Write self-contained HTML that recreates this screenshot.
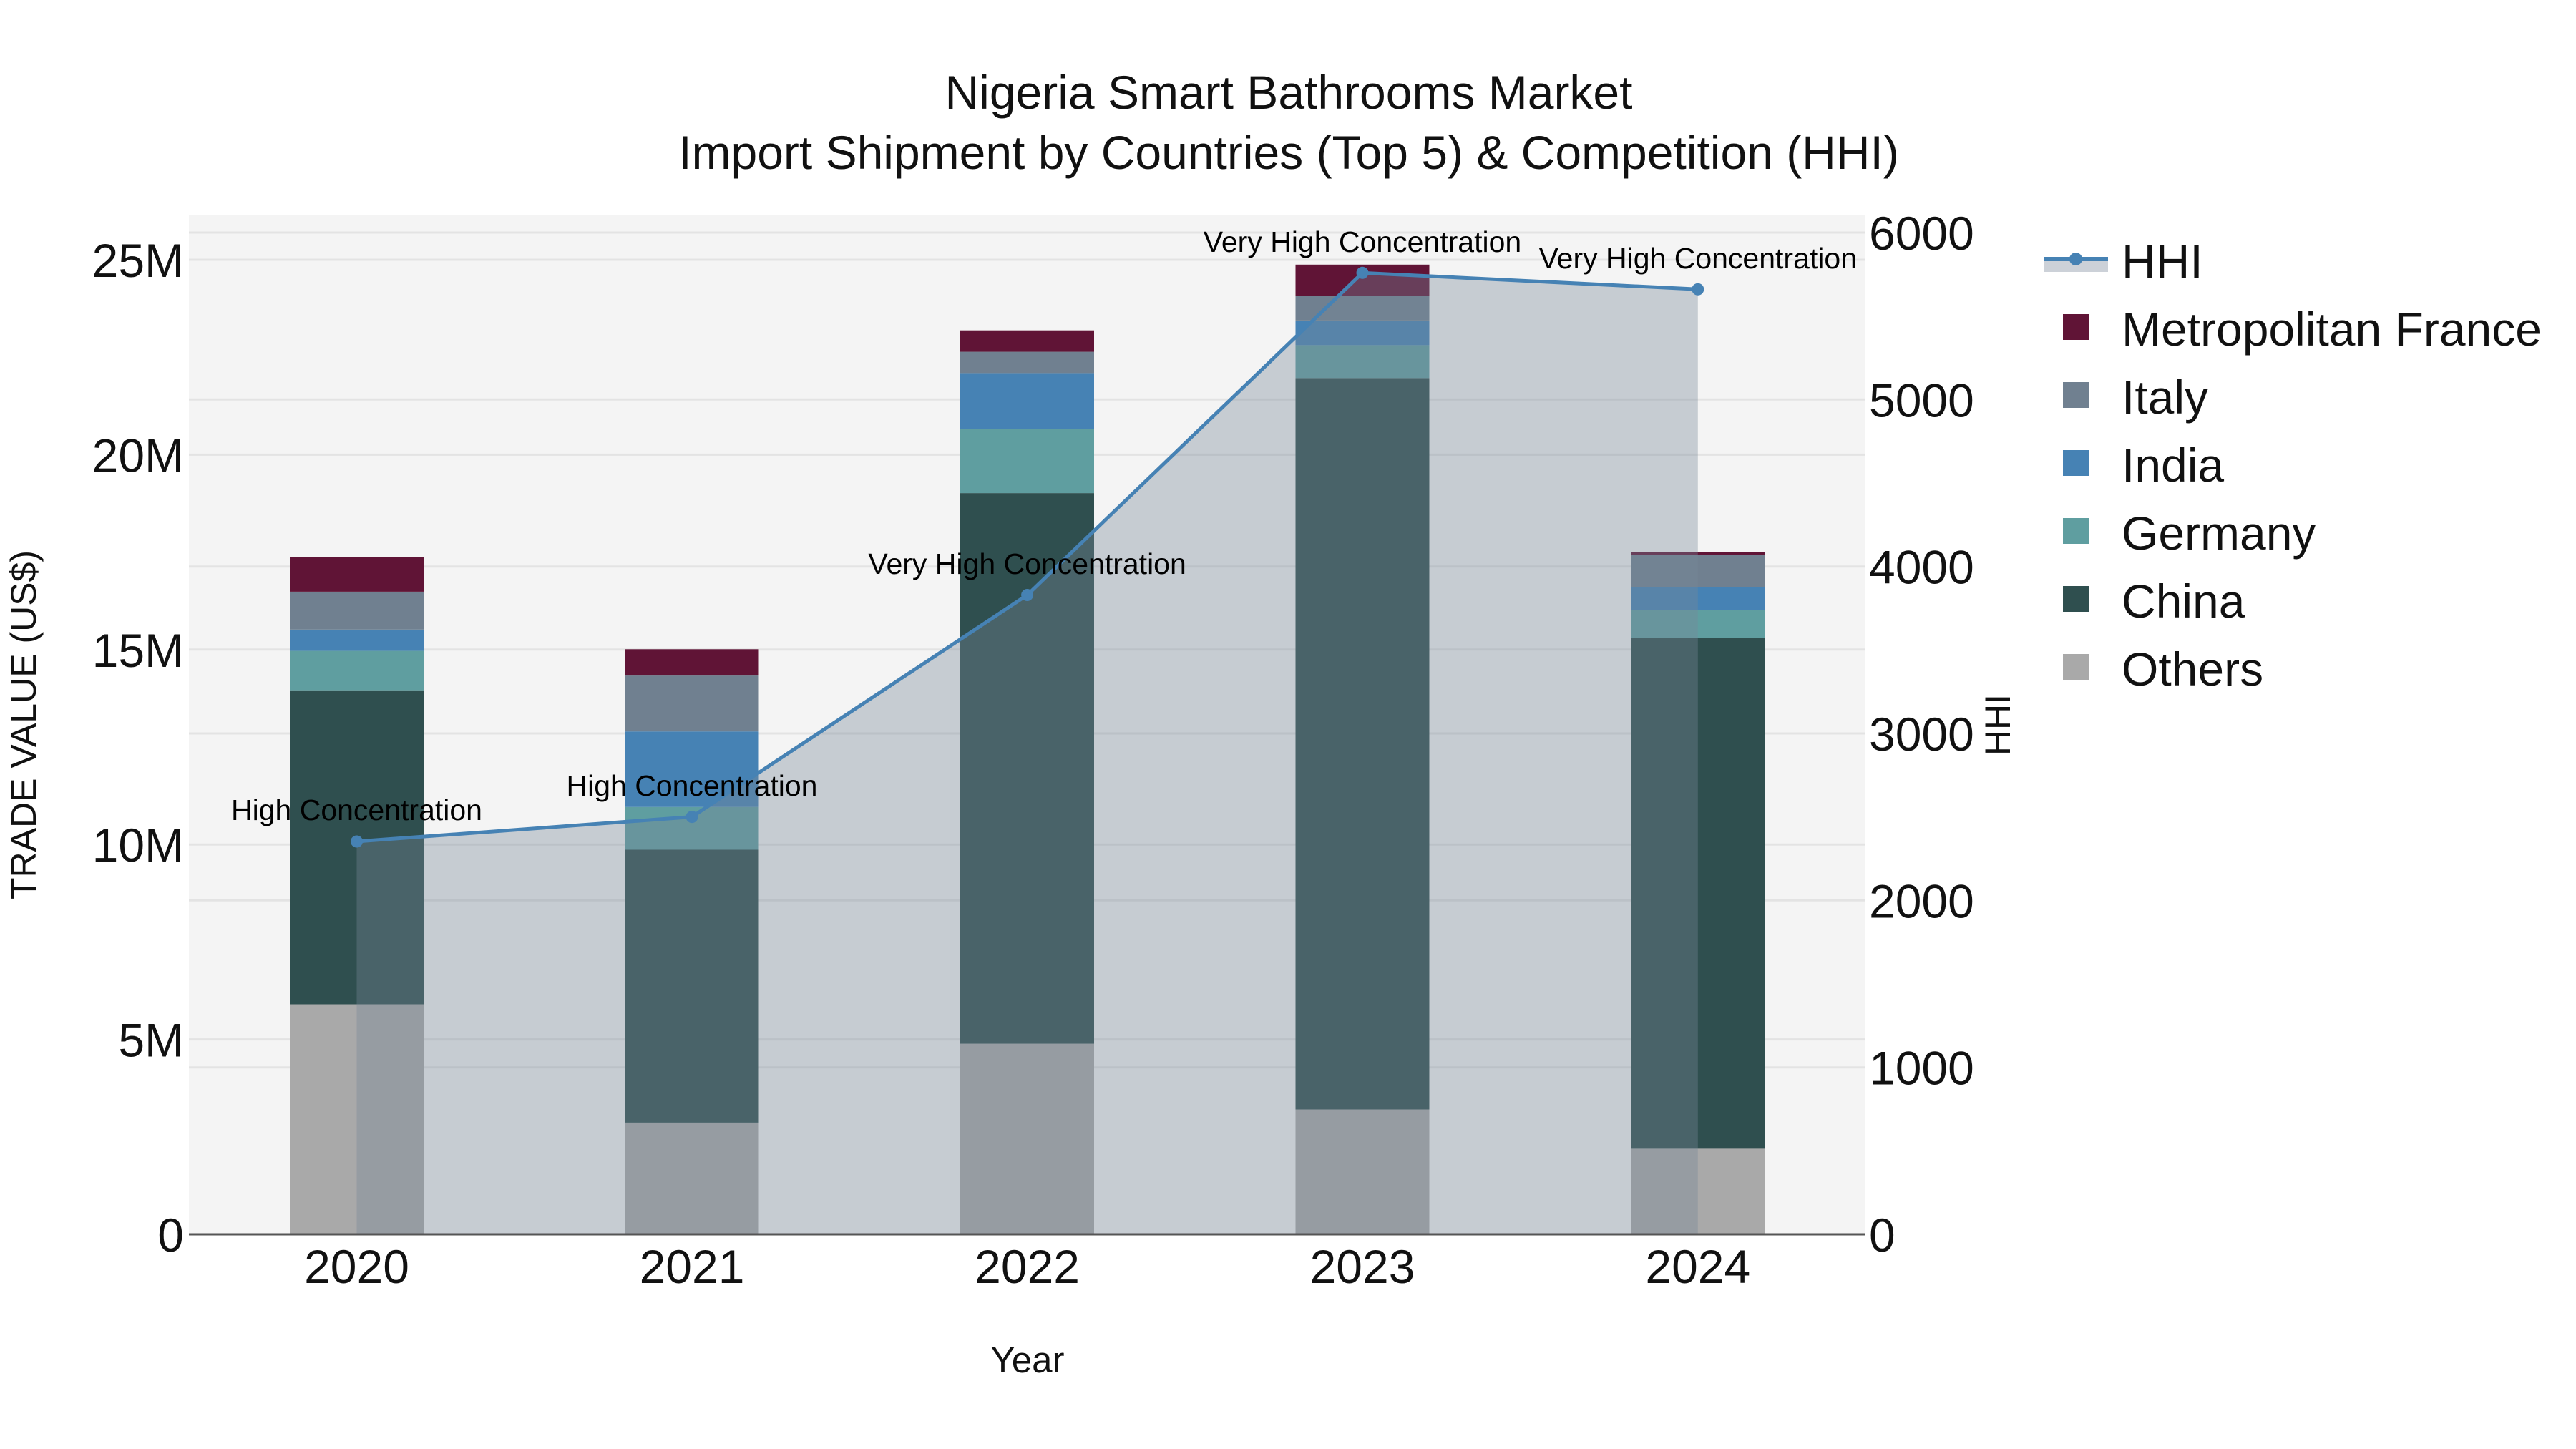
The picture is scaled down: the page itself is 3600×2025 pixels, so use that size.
<!DOCTYPE html>
<html><head><meta charset="utf-8"><style>
html,body{margin:0;padding:0;background:#fff;}
svg{display:block;font-family:"Liberation Sans",Arial,sans-serif;}
</style></head><body>
<svg width="3600" height="2025" viewBox="0 0 3600 2025" xmlns="http://www.w3.org/2000/svg">
<rect x="0" y="0" width="3600" height="2025" fill="#fff"/>
<rect x="264" y="300" width="2343" height="1425" fill="#f4f4f4"/>
<g stroke="#e3e3e3" stroke-width="3">
<line x1="264" x2="2607" y1="1452.6" y2="1452.6"/>
<line x1="264" x2="2607" y1="1180.2" y2="1180.2"/>
<line x1="264" x2="2607" y1="907.8" y2="907.8"/>
<line x1="264" x2="2607" y1="635.4" y2="635.4"/>
<line x1="264" x2="2607" y1="363" y2="363"/>
<line x1="264" x2="2607" y1="1491.7" y2="1491.7"/>
<line x1="264" x2="2607" y1="1258.3" y2="1258.3"/>
<line x1="264" x2="2607" y1="1025" y2="1025"/>
<line x1="264" x2="2607" y1="791.7" y2="791.7"/>
<line x1="264" x2="2607" y1="558.3" y2="558.3"/>
<line x1="264" x2="2607" y1="325" y2="325"/>
</g>
<!-- bars -->
<g>
<!-- 2020 -->
<rect x="405" y="1403.5" width="187" height="321.5" fill="#a9a9a9"/>
<rect x="405" y="964.7" width="187" height="438.8" fill="#2f4f4f"/>
<rect x="405" y="909.6" width="187" height="55.1" fill="#5f9ea0"/>
<rect x="405" y="879.8" width="187" height="29.8" fill="#4682b4"/>
<rect x="405" y="826.9" width="187" height="52.9" fill="#708090"/>
<rect x="405" y="778.7" width="187" height="48.2" fill="#601436"/>
<!-- 2021 -->
<rect x="873.5" y="1568.9" width="187" height="156.1" fill="#a9a9a9"/>
<rect x="873.5" y="1187.5" width="187" height="381.4" fill="#2f4f4f"/>
<rect x="873.5" y="1127.8" width="187" height="59.7" fill="#5f9ea0"/>
<rect x="873.5" y="1022.2" width="187" height="105.6" fill="#4682b4"/>
<rect x="873.5" y="944.1" width="187" height="78.1" fill="#708090"/>
<rect x="873.5" y="907.3" width="187" height="36.8" fill="#601436"/>
<!-- 2022 -->
<rect x="1342" y="1458.6" width="187" height="266.4" fill="#a9a9a9"/>
<rect x="1342" y="689.1" width="187" height="769.5" fill="#2f4f4f"/>
<rect x="1342" y="599.5" width="187" height="89.6" fill="#5f9ea0"/>
<rect x="1342" y="521.4" width="187" height="78.1" fill="#4682b4"/>
<rect x="1342" y="491.6" width="187" height="29.8" fill="#708090"/>
<rect x="1342" y="461.7" width="187" height="29.9" fill="#601436"/>
<!-- 2023 -->
<rect x="1810.5" y="1550.5" width="187" height="174.5" fill="#a9a9a9"/>
<rect x="1810.5" y="528.3" width="187" height="1022.2" fill="#2f4f4f"/>
<rect x="1810.5" y="482.4" width="187" height="45.9" fill="#5f9ea0"/>
<rect x="1810.5" y="447.9" width="187" height="34.5" fill="#4682b4"/>
<rect x="1810.5" y="413.5" width="187" height="34.4" fill="#708090"/>
<rect x="1810.5" y="369.8" width="187" height="43.7" fill="#601436"/>
<!-- 2024 -->
<rect x="2279" y="1605.4" width="187" height="119.6" fill="#a9a9a9"/>
<rect x="2279" y="891.5" width="187" height="713.9" fill="#2f4f4f"/>
<rect x="2279" y="852.6" width="187" height="38.9" fill="#5f9ea0"/>
<rect x="2279" y="821" width="187" height="31.6" fill="#4682b4"/>
<rect x="2279" y="775.5" width="187" height="45.5" fill="#708090"/>
<rect x="2279" y="771.5" width="187" height="4" fill="#601436"/>
</g>
<!-- HHI fill -->
<polygon points="498.5,1725 498.5,1176 967,1141.6 1435.6,831.5 1904,381.3 2372.8,404.3 2372.8,1725" fill="rgb(119,136,153)" fill-opacity="0.37"/>
<polyline points="498.5,1176 967,1141.6 1435.6,831.5 1904,381.3 2372.8,404.3" fill="none" stroke="#4682b4" stroke-width="5"/>
<g fill="#4682b4">
<circle cx="498.5" cy="1176" r="8.5"/>
<circle cx="967" cy="1141.6" r="8.5"/>
<circle cx="1435.6" cy="831.5" r="8.5"/>
<circle cx="1904" cy="381.3" r="8.5"/>
<circle cx="2372.8" cy="404.3" r="8.5"/>
</g>
<!-- annotations -->
<g font-size="41" fill="#000" text-anchor="middle">
<text x="498.5" y="1146">High Concentration</text>
<text x="967" y="1112">High Concentration</text>
<text x="1435.6" y="802">Very High Concentration</text>
<text x="1904" y="352">Very High Concentration</text>
<text x="2372.8" y="375">Very High Concentration</text>
</g>
<!-- axis line -->
<line x1="264" x2="2607" y1="1725" y2="1725" stroke="#555" stroke-width="3"/>
<!-- left ticks -->
<g font-size="66" fill="#111" text-anchor="end">
<text x="257" y="1749">0</text>
<text x="257" y="1476.6">5M</text>
<text x="257" y="1204.2">10M</text>
<text x="257" y="931.8">15M</text>
<text x="257" y="659.4">20M</text>
<text x="257" y="387">25M</text>
</g>
<!-- right ticks -->
<g font-size="66" fill="#111" text-anchor="start">
<text x="2612" y="1749">0</text>
<text x="2612" y="1515.7">1000</text>
<text x="2612" y="1282.3">2000</text>
<text x="2612" y="1049">3000</text>
<text x="2612" y="815.7">4000</text>
<text x="2612" y="582.3">5000</text>
<text x="2612" y="349">6000</text>
</g>
<!-- x ticks -->
<g font-size="66" fill="#111" text-anchor="middle">
<text x="498.5" y="1793">2020</text>
<text x="967" y="1793">2021</text>
<text x="1435.6" y="1793">2022</text>
<text x="1904" y="1793">2023</text>
<text x="2372.8" y="1793">2024</text>
</g>
<text x="1436" y="1918" font-size="51" fill="#111" text-anchor="middle">Year</text>
<text transform="translate(50,1013) rotate(-90)" font-size="50" fill="#111" text-anchor="middle">TRADE VALUE (US$)</text>
<text transform="translate(2809,1013) rotate(-90)" font-size="50" fill="#111" text-anchor="middle">HHI</text>
<!-- title -->
<g font-size="66" fill="#111" text-anchor="middle">
<text x="1801" y="152">Nigeria Smart Bathrooms Market</text>
<text x="1801" y="236">Import Shipment by Countries (Top 5) &amp; Competition (HHI)</text>
</g>
<!-- legend -->
<rect x="2856" y="362" width="90" height="18" fill="#ccd1d8"/>
<line x1="2856" x2="2946" y1="362" y2="362" stroke="#4682b4" stroke-width="6"/>
<circle cx="2901" cy="362" r="9" fill="#4682b4"/>
<g font-size="66" fill="#111">
<text x="2965" y="388">HHI</text>
<text x="2965" y="483">Metropolitan France</text>
<text x="2965" y="578">Italy</text>
<text x="2965" y="673">India</text>
<text x="2965" y="768">Germany</text>
<text x="2965" y="863">China</text>
<text x="2965" y="958">Others</text>
</g>
<rect x="2883" y="439" width="36" height="36" fill="#601436"/>
<rect x="2883" y="534" width="36" height="36" fill="#708090"/>
<rect x="2883" y="629" width="36" height="36" fill="#4682b4"/>
<rect x="2883" y="724" width="36" height="36" fill="#5f9ea0"/>
<rect x="2883" y="819" width="36" height="36" fill="#2f4f4f"/>
<rect x="2883" y="914" width="36" height="36" fill="#a9a9a9"/>
</svg>
</body></html>
